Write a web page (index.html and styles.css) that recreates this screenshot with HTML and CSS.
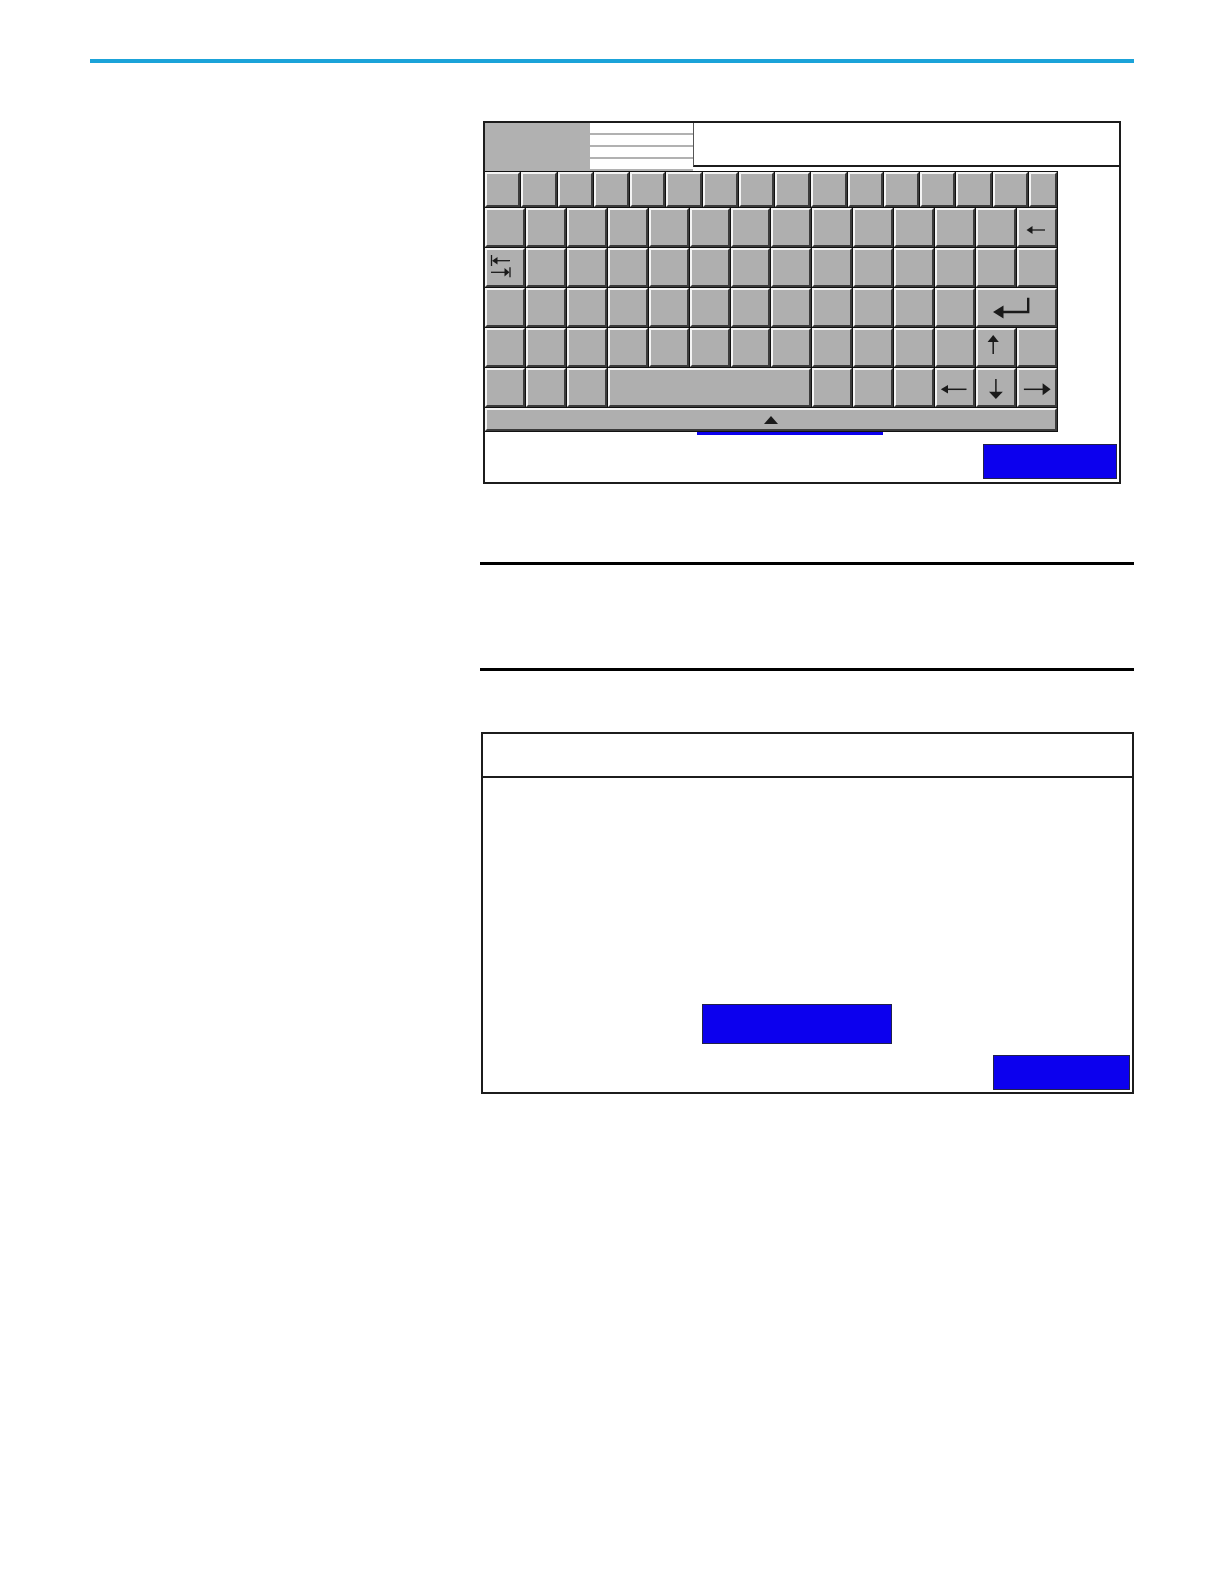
FILE: index.html
```html
<!DOCTYPE html>
<html lang="en">
<head>
<meta charset="utf-8">
<title>Keyboard screen</title>
<link rel="stylesheet" href="styles.css">
</head>
<body>
<div class="page">
  <div class="rule-top"></div>
  <div class="content">
    <div class="panel kb-panel">
      <div class="kb-head">
        <div class="head-block"></div>
        <div class="head-lines"><span></span><span></span><span></span><span></span></div>
        <div class="head-field"></div>
      </div>
      <div class="kb-main">
        <div class="keyboard">
          <div class="row row16">
            <div class="key"></div><div class="key"></div><div class="key"></div><div class="key"></div>
            <div class="key"></div><div class="key"></div><div class="key"></div><div class="key"></div>
            <div class="key"></div><div class="key"></div><div class="key"></div><div class="key"></div>
            <div class="key"></div><div class="key"></div><div class="key"></div><div class="key"></div>
          </div>
          <div class="row row14">
            <div class="key"></div><div class="key"></div><div class="key"></div><div class="key"></div>
            <div class="key"></div><div class="key"></div><div class="key"></div><div class="key"></div>
            <div class="key"></div><div class="key"></div><div class="key"></div><div class="key"></div>
            <div class="key"></div>
            <div class="key"><svg class="ico" aria-hidden="true"><polygon points="7.5,20 13.5,16 13.5,24"/><line x1="13" y1="20" x2="26" y2="20"/></svg></div>
          </div>
          <div class="row row14">
            <div class="key"><svg class="ico" aria-hidden="true">
              <line x1="4.5" y1="5" x2="4.5" y2="16"/>
              <polygon points="5,10.7 10.5,7 10.5,14.5"/>
              <line x1="10" y1="10.7" x2="23" y2="10.7"/>
              <line x1="4" y1="22.3" x2="18.5" y2="22.3"/>
              <polygon points="17.5,18 22.5,22.3 17.5,26.6"/>
              <line x1="23" y1="17.3" x2="23" y2="27.3"/>
            </svg></div>
            <div class="key"></div><div class="key"></div><div class="key"></div><div class="key"></div>
            <div class="key"></div><div class="key"></div><div class="key"></div><div class="key"></div>
            <div class="key"></div><div class="key"></div><div class="key"></div><div class="key"></div>
            <div class="key"></div>
          </div>
          <div class="row row14">
            <div class="key"></div><div class="key"></div><div class="key"></div><div class="key"></div>
            <div class="key"></div><div class="key"></div><div class="key"></div><div class="key"></div>
            <div class="key"></div><div class="key"></div><div class="key"></div><div class="key"></div>
            <div class="key s2"><svg class="ico" aria-hidden="true">
              <polygon points="15,22 25.5,15.5 25.5,28.5"/>
              <path class="thick" d="M25 22 H50.2 V9"/>
            </svg></div>
          </div>
          <div class="row row14">
            <div class="key"></div><div class="key"></div><div class="key"></div><div class="key"></div>
            <div class="key"></div><div class="key"></div><div class="key"></div><div class="key"></div>
            <div class="key"></div><div class="key"></div><div class="key"></div><div class="key"></div>
            <div class="key"><svg class="ico" aria-hidden="true">
              <polygon points="15.2,5 9.6,12 20.8,12"/>
              <line class="mid" x1="15.2" y1="11" x2="15.2" y2="24"/>
            </svg></div>
            <div class="key"></div>
          </div>
          <div class="row row14">
            <div class="key"></div><div class="key"></div><div class="key"></div>
            <div class="key s5"></div>
            <div class="key"></div><div class="key"></div><div class="key"></div>
            <div class="key"><svg class="ico" aria-hidden="true">
              <polygon points="3.8,19.3 11,15 11,23.6"/>
              <line class="mid" x1="10.5" y1="19.3" x2="29.5" y2="19.3"/>
            </svg></div>
            <div class="key"><svg class="ico" aria-hidden="true">
              <line class="mid" x1="17.9" y1="9" x2="17.9" y2="22.5"/>
              <polygon points="11,21.7 24.8,21.7 17.9,29"/>
            </svg></div>
            <div class="key"><svg class="ico" aria-hidden="true">
              <line class="mid" x1="4.9" y1="19.3" x2="24.5" y2="19.3"/>
              <polygon points="23.6,13.3 31.6,19.3 23.6,25.3"/>
            </svg></div>
          </div>
          <div class="key bar"><span class="tri"></span></div>
        </div>
      </div>
      <div class="kb-foot">
        <div class="peek"></div>
        <div class="btn btn-ok"></div>
      </div>
    </div>

    <div class="hr hr1"></div>
    <div class="hr hr2"></div>

    <div class="panel dlg">
      <div class="dlg-head"></div>
      <div class="dlg-body">
        <div class="btn btn-wide"></div>
        <div class="btn btn-ok2"></div>
      </div>
    </div>
  </div>
</div>
</body>
</html>
```

FILE: styles.css
```css
* { box-sizing: border-box; }

html, body {
  margin: 0;
  padding: 0;
  background: #ffffff;
  font-family: "Liberation Sans", Arial, sans-serif;
}

.page {
  width: 1224px;
  min-height: 1584px;
  padding: 59px 0 0 90px;
}

.rule-top {
  width: 1044px;
  height: 4px;
  background: #1ba3d9;
}

.content {
  margin-left: 390px;
  width: 654px;
}

.panel {
  border: 2px solid #1c1c1c;
  background: #ffffff;
}

/* ---------- keyboard panel ---------- */
.kb-panel {
  margin-top: 58px;
  margin-left: 3px;
  width: 638px;
  height: 363px;
  display: flex;
  flex-direction: column;
}

.kb-head {
  display: flex;
  align-items: flex-start;
  height: 48px;
  flex: none;
}

.head-block {
  width: 105px;
  height: 48px;
  background: #b1b1b1;
}

.head-lines {
  width: 103px;
  height: 48px;
  background: #b1b1b1;
  display: flex;
  flex-direction: column;
  gap: 2px;
  padding-bottom: 2px;
}

.head-lines span {
  display: block;
  height: 10px;
  background: #ffffff;
}

.head-field {
  flex: 1;
  height: 44px;
  border-left: 1px solid #555555;
  border-bottom: 2px solid #1c1c1c;
  background: #ffffff;
}

.kb-main {
  display: flex;
  flex: none;
}

.keyboard {
  width: 573px;
  background: #111111;
  border-top: 1px solid #111111;
  border-right: 1px solid #111111;
  border-bottom: 1px solid #111111;
  display: flex;
  flex-direction: column;
  gap: 1px;
}

.row {
  display: grid;
  column-gap: 1px;
  flex: none;
}

.row16 {
  height: 35px;
  grid-template-rows: 35px;
  grid-template-columns: repeat(15, 1fr) 0.8fr;
}

.row14 {
  height: 39px;
  grid-template-rows: 39px;
  grid-template-columns: repeat(14, 1fr);
}

.key {
  background: #afafaf;
  border: 2px solid;
  border-color: #f4f4f4 #3b3b3b #3b3b3b #f4f4f4;
  min-width: 0;
  min-height: 0;
  overflow: hidden;
}

.s2 { grid-column: span 2; }
.s5 { grid-column: span 5; }

.ico {
  display: block;
  width: 100%;
  height: 100%;
  overflow: visible;
}

.ico polygon {
  fill: #1a1a1a;
  stroke: none;
}

.ico line,
.ico path {
  stroke: #1a1a1a;
  stroke-width: 1.3;
  fill: none;
}

.ico .mid { stroke-width: 1.5; }

.ico .thick {
  stroke-width: 2.4;
  stroke-linecap: square;
}

.bar {
  height: 23px;
  flex: none;
  display: flex;
  align-items: center;
  justify-content: center;
}

.tri {
  display: block;
  width: 0;
  height: 0;
  border-left: 7px solid transparent;
  border-right: 7px solid transparent;
  border-bottom: 8px solid #1a1a1a;
  margin-top: 1px;
}

.kb-foot {
  flex: 1;
  display: flex;
  flex-direction: column;
}

.peek {
  margin-left: 212px;
  width: 186px;
  height: 3px;
  background: #0c00ee;
}

.btn {
  background: #0c00ee;
  border: 1px solid #22224a;
}

.btn-ok {
  align-self: flex-end;
  margin-top: 9px;
  margin-right: 2px;
  width: 134px;
  height: 35px;
}

/* ---------- rules ---------- */
.hr {
  height: 3px;
  background: #000000;
  width: 654px;
}

.hr1 { margin-top: 78px; }
.hr2 { margin-top: 103px; }

/* ---------- dialog panel ---------- */
.dlg {
  margin-top: 61px;
  margin-left: 1px;
  width: 653px;
  height: 362px;
  display: flex;
  flex-direction: column;
}

.dlg-head {
  height: 44px;
  border-bottom: 2px solid #1c1c1c;
}

.dlg-body {
  flex: 1;
  display: flex;
  flex-direction: column;
  padding-top: 226px;
}

.btn-wide {
  margin-left: 219px;
  width: 190px;
  height: 40px;
}

.btn-ok2 {
  align-self: flex-end;
  margin-top: 11px;
  margin-right: 2px;
  width: 137px;
  height: 35px;
}
```
